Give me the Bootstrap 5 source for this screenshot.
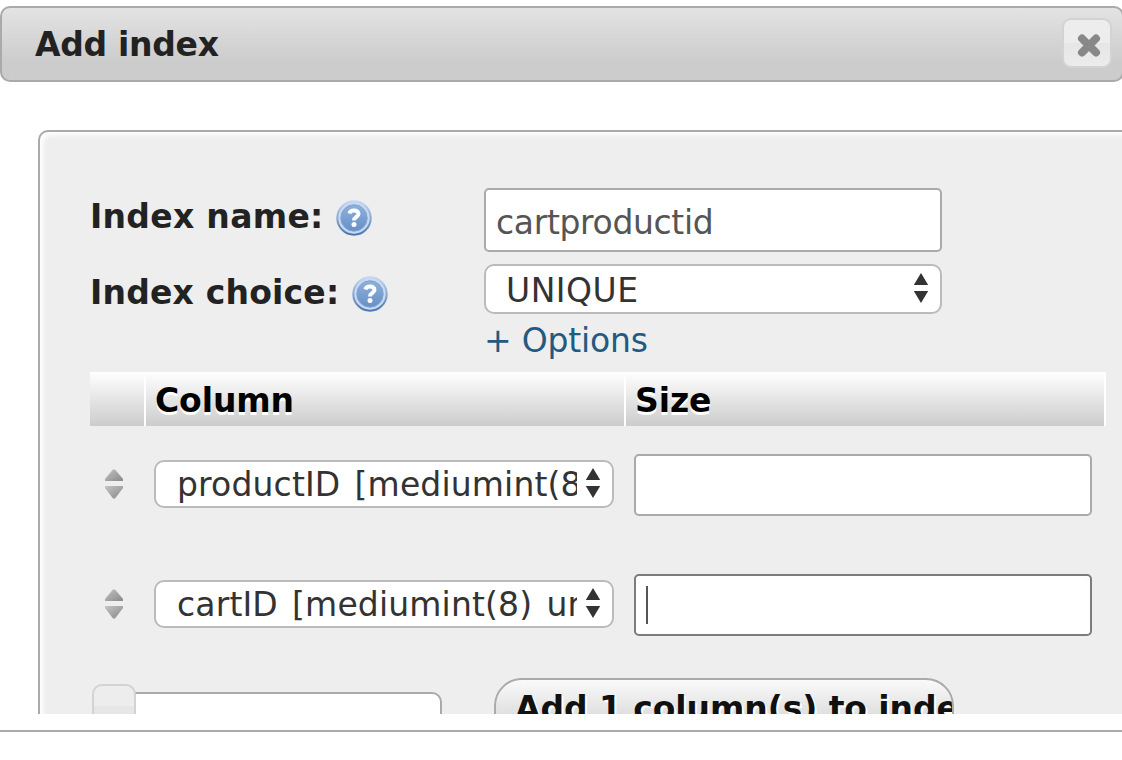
<!DOCTYPE html>
<html lang="en">
<head>
<meta charset="utf-8">
<title>Add index</title>
<link href="https://cdn.jsdelivr.net/npm/bootstrap@5.3.0/dist/css/bootstrap.min.css" rel="stylesheet">
<style>
body{font-family:"DejaVu Sans",Verdana,sans-serif;font-size:33px;line-height:40px;color:#222;background:#fff;width:1122px;height:760px;overflow:hidden;padding-top:6px}
.dialog-head{width:1124px;height:76px;border:2px solid #aaa;border-radius:10px;background:linear-gradient(#e3e3e3,#ccc 75%,#ccc);padding:0 10px 0 33px}
.dialog-head h1{font-size:33px;line-height:40px;font-weight:700;letter-spacing:-.3px;padding-top:2px}
.close-btn{width:50px;height:50px;border:2px solid #d3d3d3;border-radius:9px;background:linear-gradient(#ededed 50%,#e6e6e6 50%,#ececec);margin-top:-2px}
.dialog-body{height:632px;padding:48px 0 0 38px}
.index-panel{width:1110px;height:700px;border:2px solid #aaa;border-radius:10px;background:#eee;box-shadow:inset 3px 3px 5px #fff;padding:56px 0 0 50px}
.field-grid{display:grid;grid-template-columns:394px 458px;grid-template-rows:64px 50px 42px;row-gap:12px;height:184px}
.field-label{font-weight:700;letter-spacing:.3px;padding-bottom:7px}
.field-label-low{padding:7px 0 0;letter-spacing:.2px}
.help{margin:3px 0 0 12px}
.field-label-low .help{margin-left:13px}
.form-control.field{height:62px;border:2px solid #aaa;border-radius:5px;background:#fff;color:#555;font-size:33px;line-height:40px;padding:4px 10px 0;width:458px;letter-spacing:-.35px}
.form-control.field-name{height:64px}
.form-control.field-active{border-color:#7c7c7c}
.picker{height:48px;border:2px solid #bbb;border-radius:10px;background:#fff;color:#333;padding:0 11px 0 21px;width:460px;margin-top:-2px}
.picker svg{margin-top:-2px}
.picker-lg{height:50px;width:458px;margin-top:0;padding-left:20px;letter-spacing:.5px}
.picker-text{flex:1 1 0;overflow:hidden;white-space:nowrap;padding-top:2px}
.picker-lg .picker-text{padding-top:4px}
.more{color:#235a81;text-decoration:none;line-height:40px;margin-top:-5px;letter-spacing:-.2px}
.cols-row{display:grid;grid-template-columns:56px 480px 480px;width:1016px}
.cols-head>div{height:54px;border-right:2px solid #fff;background:linear-gradient(#fff,#ccc);color:#000;font-weight:700;text-shadow:0 3px 0 #fff;padding:4px 0 0 9px;letter-spacing:-.1px}
.cols-item{height:120px;padding-bottom:2px}
.cols-item .picker-text{letter-spacing:.15px;word-spacing:3.5px}
.sort-handle{margin:-2px 0 0 14px}
.caret-bar{width:2px;height:38px;background:#555}
.slider-track{width:350px;height:44px;border:2px solid #aaa;border-radius:10px;background:#fff;margin-top:14px}
.slider-grip{width:44px;height:52px;border:2px solid #d3d3d3;border-radius:10px;background:linear-gradient(#ededed 42%,#e6e6e6 42%);margin:-10px 0 0 -2px}
.last-row{padding:12px 0 0 2px}
.add-btn{width:460px;height:64px;border:2px solid #aaa;border-radius:28px;background:linear-gradient(#fafafa,#ccc);color:#111;font-weight:700;letter-spacing:-.08px;text-shadow:2px 2px 0 #fff;padding:0 0 2px 19px;margin-left:52px;white-space:nowrap;overflow:hidden;text-align:left}
.dialog-foot{margin-top:16px;border-top:2px solid #aaa}
.grads{width:0;height:0}
</style>
</head>
<body>
<svg class="grads position-absolute">
  <defs>
    <linearGradient id="ring" x1="0" y1="0" x2="0" y2="1"><stop offset="0" stop-color="#c5d8f2"/><stop offset="1" stop-color="#4c78b4"/></linearGradient>
    <linearGradient id="disc" x1="0" y1="0" x2="0" y2="1"><stop offset="0" stop-color="#8fb0dc"/><stop offset="1" stop-color="#6690c8"/></linearGradient>
    <linearGradient id="grey" x1="0" y1="0" x2="1" y2="1"><stop offset="0" stop-color="#c4c4c4"/><stop offset="1" stop-color="#888"/></linearGradient>
    <symbol id="help-icon" viewBox="0 0 36 36"><circle cx="18" cy="18" r="16.700" fill="#c9daf0" stroke="url(#ring)" stroke-width="2"/><circle cx="18" cy="18" r="13.200" fill="url(#disc)" stroke="#7fa2d0" stroke-width="1"/><path d="M13.500 13.500c.8-4 9-4 9 .5 0 3-4.500 2.800-4.500 6.500" fill="none" stroke="#fff" stroke-width="4"/><circle cx="18" cy="24.500" r="2.500" fill="#fff"/></symbol>
    <symbol id="updown" viewBox="0 0 16 32"><path d="M8 1l7.200 12H.8zM.8 19h14.400L8 31z" fill="#333"/></symbol>
    <symbol id="sort-grip" viewBox="0 0 20 32"><path d="M1 13v-2l8-9.500h2l8 9.500v2z" fill="url(#grey)"/><path d="M1 18v2l8 10.500h2L19 20v-2z" fill="url(#grey)"/></symbol>
  </defs>
</svg>
<header class="dialog-head d-flex align-items-center justify-content-between">
  <h1 class="mb-0">Add index</h1>
  <button class="close-btn d-flex p-0" aria-label="Close"><svg width="46" height="46" viewBox="0 0 46 46"><path d="M18 18.500l14 14M32 18.500l-14 14" stroke="#888" stroke-width="8" stroke-linecap="round"/></svg></button>
</header>
<main class="dialog-body overflow-hidden">
  <section class="index-panel">
    <div class="field-grid">
      <label class="field-label d-flex align-items-center">Index name:<svg class="help" width="36" height="36"><use href="#help-icon"/></svg></label>
      <input class="form-control field field-name" value="cartproductid" aria-label="Index name">
      <label class="field-label field-label-low d-flex align-items-center">Index choice:<svg class="help" width="36" height="36"><use href="#help-icon"/></svg></label>
      <div class="picker picker-lg d-flex align-items-center"><span class="picker-text">UNIQUE</span><svg width="16" height="32"><use href="#updown"/></svg></div>
      <span></span>
      <a class="more" href="#">+ Options</a>
    </div>
    <div class="cols-row cols-head">
      <div></div>
      <div class="d-flex align-items-center">Column</div>
      <div class="d-flex align-items-center">Size</div>
    </div>
    <div class="cols-row cols-item align-items-center">
      <svg class="sort-handle" width="20" height="32"><use href="#sort-grip"/></svg>
      <div class="picker d-flex align-items-center ms-2"><span class="picker-text">productID [mediumint(8) unsigned]</span><svg class="ms-2" width="16" height="32"><use href="#updown"/></svg></div>
      <input class="form-control field ms-2" aria-label="Size">
    </div>
    <div class="cols-row cols-item align-items-center">
      <svg class="sort-handle" width="20" height="32"><use href="#sort-grip"/></svg>
      <div class="picker d-flex align-items-center ms-2"><span class="picker-text">cartID [mediumint(8) unsigned]</span><svg class="ms-2" width="16" height="32"><use href="#updown"/></svg></div>
      <div class="form-control field field-active ms-2 d-flex align-items-center pt-0"><span class="caret-bar"></span></div>
    </div>
    <div class="last-row d-flex align-items-start">
      <div class="slider-track"><div class="slider-grip"></div></div>
      <button class="add-btn">Add 1 column(s) to index</button>
    </div>
  </section>
</main>
<footer class="dialog-foot"></footer>
<script src="https://cdn.jsdelivr.net/npm/bootstrap@5.3.0/dist/js/bootstrap.bundle.min.js"></script>
</body>
</html>
